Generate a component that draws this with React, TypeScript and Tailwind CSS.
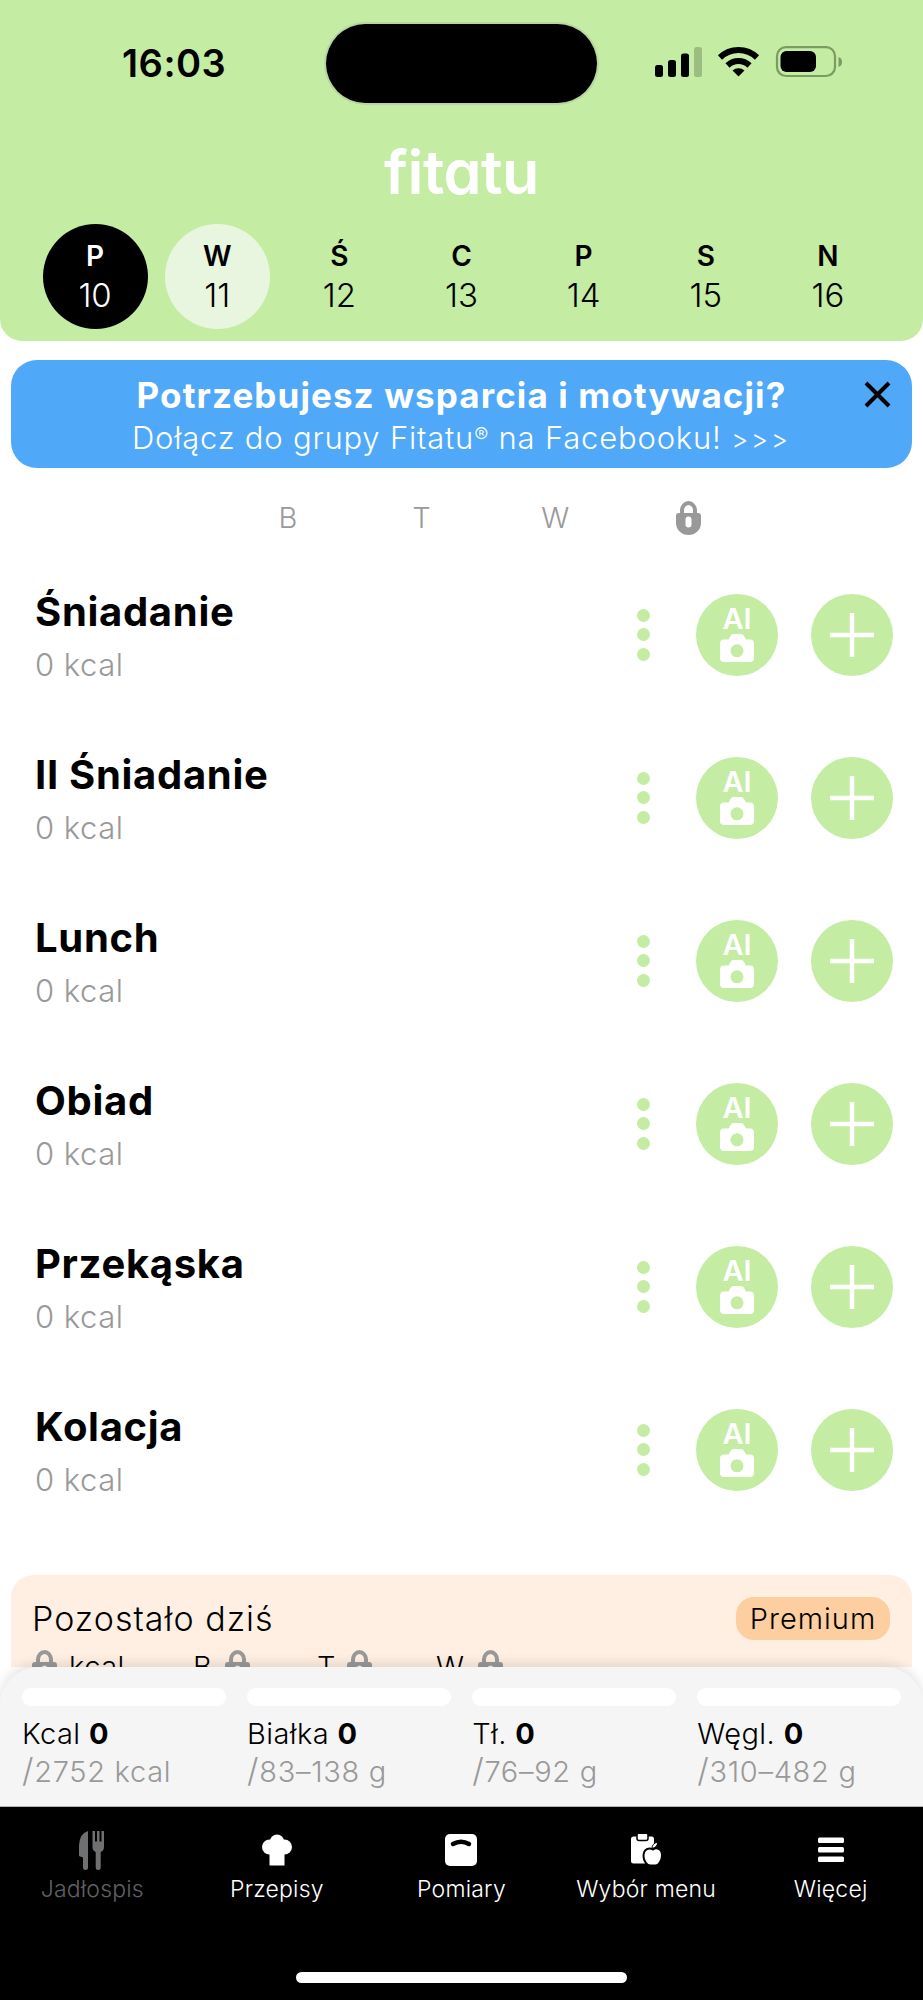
const days = [
    { letter: "P", number: "10", circle: "bg-black text-white" },
    { letter: "W", number: "11", circle: "bg-[#e9f6df] text-black" },
    { letter: "Ś", number: "12", circle: "text-black" },
    { letter: "C", number: "13", circle: "text-black" },
    { letter: "P", number: "14", circle: "text-black" },
    { letter: "S", number: "15", circle: "text-black" },
    { letter: "N", number: "16", circle: "text-black" },
];

const meals = ["Śniadanie", "II Śniadanie", "Lunch", "Obiad", "Przekąska", "Kolacja"];

const macros = [
    { name: "Kcal", goal: "2752 kcal" },
    { name: "Białka", goal: "83–138 g" },
    { name: "Tł.", goal: "76–92 g" },
    { name: "Węgl.", goal: "310–482 g" },
];

function Lock() {
    return (
        <svg className="shrink-0" width="25" height="34" viewBox="0 0 25 34">
            <path d="M6 15V9.5a6.5 7.5 0 0 1 13 0V15" fill="none" stroke="#999" strokeWidth="4" />
            <path fillRule="evenodd" fill="#999" d="M3 12h19a3 3 0 0 1 3 3v7a12.500 12 0 0 1-25 0v-7a3 3 0 0 1 3-3zM12.500 15.500a3 3 0 0 0-3 3v5a3 3 0 0 0 6 0v-5a3 3 0 0 0-3-3z" />
        </svg>
    );
}

function StatusBar() {
    return (
        <div className="flex h-[126px] pt-6">
            <div className="w-[326px] pl-[122px] pt-[19px] text-[38px] leading-[40px] font-semibold tracking-[0.5px]">16:03</div>
            <div className="h-[79px] w-[271px] rounded-full bg-black ring-2 ring-[#b9d5a2]" />
            <svg className="ml-[58px] mt-[22px]" width="188" height="32" viewBox="0 0 188 32">
                <rect x="0" y="19" width="8" height="12" rx="2.500" />
                <rect x="13" y="14" width="8" height="17" rx="2.500" />
                <rect x="26" y="7.500" width="8" height="23.500" rx="2.500" />
                <rect x="39" y="1" width="8" height="30" rx="2.500" fill="#9cbd82" />
                <g fill="none" stroke="#000" strokeWidth="6">
                    <path d="M65 11.500a26.500 26.500 0 0 1 37 0" />
                    <path d="M72.500 19.500a16 16 0 0 1 22 0" />
                </g>
                <path d="M77.500 24.500a9 9 0 0 1 12 0l-6 6z" />
                <rect x="122" y="1.200" width="58" height="28.800" rx="9" fill="none" stroke="#7b9b62" strokeWidth="2.200" />
                <rect x="125.500" y="5" width="35.500" height="21" rx="6" />
                <path d="M183.500 11v10q3.500-1 3.500-5t-3.500-5z" fill="#7b9b62" />
            </svg>
        </div>
    );
}

function Header() {
    return (
        <div className="h-[341px] rounded-b-[22px] bg-[#c4eca3]">
            <StatusBar />
            <div className="flex h-[98px] justify-center">
                <span className="pt-[7px] text-[61px] leading-[78px] font-semibold tracking-[-0.5px] text-white [font-feature-settings:'cv11']">fitatu</span>
            </div>
            <div className="flex px-[34px]">
                {days.map((day) => (
                    <div key={day.number} className="flex w-[122.150px] justify-center">
                        <div className={`flex size-[105px] flex-col items-center rounded-full pt-[17px] ${day.circle}`}>
                            <span className="text-[28px] leading-[30px] font-semibold">{day.letter}</span>
                            <span className="mt-[7px] text-[33px] leading-[34px] font-light">{day.number}</span>
                        </div>
                    </div>
                ))}
            </div>
        </div>
    );
}

function Banner() {
    return (
        <div className="relative mx-[11px] mt-[19px] h-[108px] rounded-[26px] bg-[#4fa8f8] pt-[15px] text-center text-white">
            <div className="text-[35px] leading-[40px] font-bold tracking-[1.1px]">Potrzebujesz wsparcia i motywacji?</div>
            <div className="mt-[3px] text-[31px] leading-[40px] font-light tracking-[0.8px]">
                Dołącz do grupy Fitatu<span className="relative -top-1.5 text-[21px]">®</span> na Facebooku!{" "}
                <span className="text-[26px] tracking-[3px]">&gt;&gt;&gt;</span>
            </div>
            <svg className="absolute right-[21px] top-[21px]" width="27" height="27" viewBox="0 0 27 27">
                <path d="M2 2l23 23M25 2L2 25" stroke="#000" strokeWidth="4" />
            </svg>
        </div>
    );
}

function Meal({ name }: { name: string }) {
    return (
        <div className="flex h-[163px] pl-[35px]">
            <div className="flex-1 pt-[34px]">
                <div className="text-[40px] leading-[48px] font-bold tracking-[0.7px]">{name}</div>
                <div className="mt-[9px] text-[31px] leading-[40px] font-light tracking-[0.5px] text-[#999]">0 kcal</div>
            </div>
            <div className="flex items-center pb-[2px] pr-[30px]">
                <div className="flex flex-col gap-[6.500px]">
                    <div className="size-[13px] rounded-full bg-[#c4eca3]" />
                    <div className="size-[13px] rounded-full bg-[#c4eca3]" />
                    <div className="size-[13px] rounded-full bg-[#c4eca3]" />
                </div>
                <div className="ml-[46px] flex size-[82px] flex-col items-center rounded-full bg-[#c4eca3] pt-[9px] text-white">
                    <span className="text-[29px] leading-[31px] font-semibold">AI</span>
                    <svg width="34" height="28" viewBox="0 0 34 28">
                        <path
                            fill="#fff"
                            fillRule="evenodd"
                            d="M4 5.500h4.500L10.500 2Q11.500 0 13.500 0h7.500q2 0 3 2l2 3.500h4a4 4 0 0 1 4 4V24a4 4 0 0 1-4 4H4a4 4 0 0 1-4-4V9.500a4 4 0 0 1 4-4zM17 10.300a6.500 6.500 0 1 0 0 13 6.500 6.500 0 0 0 0-13z"
                        />
                    </svg>
                </div>
                <div className="ml-[33px] flex size-[82px] items-center justify-center rounded-full bg-[#c4eca3]">
                    <svg width="44" height="44" viewBox="0 0 44 44">
                        <path d="M22 0v44M0 22h44" stroke="#fff" strokeWidth="4.500" />
                    </svg>
                </div>
            </div>
        </div>
    );
}

function Remaining() {
    return (
        <div className="mx-[11px] h-[92px] overflow-hidden rounded-t-[22px] bg-[#ffefe2]">
            <div className="flex items-start justify-between pl-[21px] pr-[22px] pt-[22px]">
                <span className="text-[34px] leading-[44px] font-light tracking-[1px]">Pozostało dziś</span>
                <span className="h-[43px] w-[154px] rounded-[18px] bg-[#fdcea0] text-center text-[29px] leading-[43px] font-light tracking-[1px]">Premium</span>
            </div>
            <div className="flex pl-[21px] pt-[9px] text-[29px] leading-[33px] font-light">
                <div className="flex w-[161px] gap-3"><Lock /><span className="tracking-[0.5px]">kcal</span></div>
                <div className="flex w-[124px] gap-3"><span className="w-[20px]">B</span><Lock /></div>
                <div className="flex w-[119px] gap-2.5"><span className="w-[20px]">T</span><Lock /></div>
                <div className="flex gap-3"><span className="w-[30px]">W</span><Lock /></div>
            </div>
        </div>
    );
}

function Summary() {
    return (
        <div className="flex h-[139px] gap-[21.500px] rounded-t-[38px] bg-[#f5f5f5] px-[22px] pt-[21px] shadow-[0_-3px_12px_rgba(0,0,0,0.12)]">
            {macros.map((macro) => (
                <div key={macro.name} className="w-[203.600px]">
                    <div className="h-[18px] rounded-full bg-white" />
                    <div className="mt-[10px] text-[29px] leading-[36px] font-light tracking-[0.4px]">
                        {macro.name} <span className="font-bold">0</span>
                    </div>
                    <div className="text-[29px] leading-[38px] font-light tracking-[0.7px] text-[#999]">
                        <span className="text-[33px] leading-[36px]">/</span>{macro.goal}
                    </div>
                </div>
            ))}
        </div>
    );
}

function Cutlery() {
    return (
        <svg width="26" height="39" viewBox="0 0 26 39" fill="#6f7072">
            <path d="M9 0v36.500a2.500 2.500 0 0 1-5 0V26.500L0 25V14Q1 2 9 0z" />
            <path d="M13.500 0h2.500v10.500h2V0h2.500v10.500h2V0H25v16q0 3.500-3.300 5v15.500a2.500 2.500 0 0 1-5 0V21q-3.200-1.500-3.200-5z" />
        </svg>
    );
}

function ChefHat() {
    return (
        <svg width="30" height="32" viewBox="0 0 30 32" fill="#fff">
            <circle cx="7.500" cy="13" r="7.500" />
            <circle cx="22.500" cy="13" r="7.500" />
            <circle cx="15" cy="7.500" r="7" />
            <path d="M7.500 10h15v21.500h-15z" />
        </svg>
    );
}

function Scale() {
    return (
        <svg width="32" height="32" viewBox="0 0 32 32">
            <rect width="32" height="32" rx="5" fill="#fff" />
            <path d="M8 10q8-4.500 16 0" fill="none" stroke="#000" strokeWidth="4.500" strokeLinecap="round" />
        </svg>
    );
}

function MenuPlan() {
    return (
        <svg width="31" height="32" viewBox="0 0 31 32">
            <rect x="0" y="2.500" width="23" height="27" rx="2.500" fill="#fff" />
            <rect x="6" y="-1" width="11" height="7.500" rx="2" fill="#fff" stroke="#000" strokeWidth="1.500" />
            <path
                d="M22 15.500c3-2.200 9-1.500 9 6 0 5-3.500 10.500-7 10h-4c-4 .5-7.500-4.500-7.500-9.500 0-7.500 6-8.700 9.500-6.500z"
                fill="#fff"
                stroke="#000"
                strokeWidth="2"
            />
            <path d="M21 14.500q0-5 5.500-6.500.5 5-5.500 6.500z" fill="#fff" stroke="#000" strokeWidth="1" />
        </svg>
    );
}

function Bars() {
    return (
        <svg width="26" height="26" viewBox="0 0 26 26" fill="#fff">
            <rect y="0.500" width="26" height="5.500" rx="1.500" />
            <rect y="10" width="26" height="5.500" rx="1.500" />
            <rect y="19.500" width="26" height="5.500" rx="1.500" />
        </svg>
    );
}

const tabs = [
    { label: "Jadłospis", icon: <Cutlery />, color: "text-[#606163]" },
    { label: "Przepisy", icon: <ChefHat />, color: "text-white" },
    { label: "Pomiary", icon: <Scale />, color: "text-white" },
    { label: "Wybór menu", icon: <MenuPlan />, color: "text-white" },
    { label: "Więcej", icon: <Bars />, color: "text-white" },
];

function Nav() {
    return (
        <div className="flex h-[194px] flex-col items-center justify-between border-t border-[#b5b5b5] bg-black pb-[17px]">
            <div className="grid w-full grid-cols-5 pt-[23px]">
                {tabs.map((tab) => (
                    <div key={tab.label} className={`flex flex-col items-center ${tab.color}`}>
                        <div className="flex h-10 items-center">{tab.icon}</div>
                        <span className="mt-[5px] text-[23px] leading-[28px] font-light tracking-[0.2px] whitespace-nowrap">{tab.label}</span>
                    </div>
                ))}
            </div>
            <div className="h-[11px] w-[331px] rounded-full bg-white" />
        </div>
    );
}

export default function App() {
    return (
        <div className="flex h-[2000px] w-[923px] flex-col overflow-hidden bg-white font-['Inter',sans-serif] text-black">
            <Header />
            <Banner />
            <div className="ml-[221px] mt-[29px] flex h-[57px] items-start text-center text-[29px] leading-[42px] font-light text-[#999]">
                <span className="w-[133.700px]">B</span>
                <span className="w-[133.700px]">T</span>
                <span className="w-[133.700px]">W</span>
                <span className="flex w-[133.700px] justify-center pt-1"><Lock /></span>
            </div>
            <div className="h-[1021px] shrink-0">
                {meals.map((meal) => (
                    <Meal key={meal} name={meal} />
                ))}
            </div>
            <Remaining />
            <Summary />
            <Nav />
        </div>
    );
}
